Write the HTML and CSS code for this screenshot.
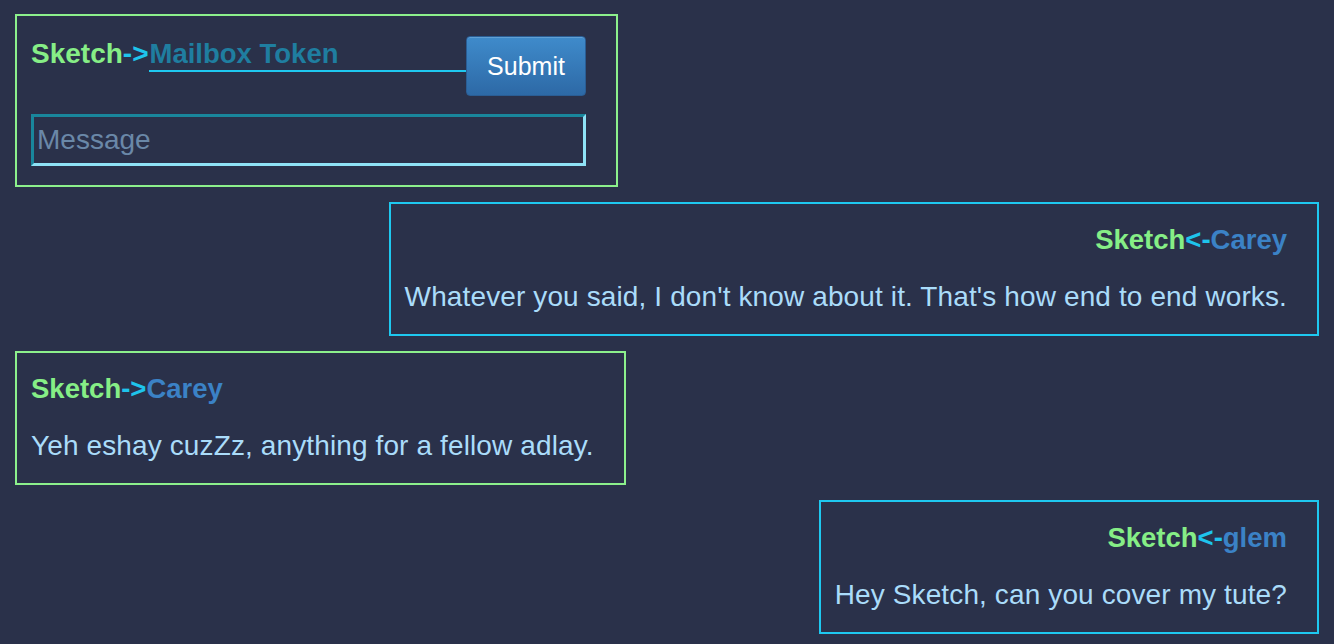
FILE: index.html
```html
<!DOCTYPE html>
<html lang="en">
<head>
<meta charset="utf-8">
<title>Sketch Mailbox</title>
<link rel="stylesheet" href="styles.css">
</head>
<body>
<main class="feed">
  <form class="card card-out compose">
    <div class="compose-row">
      <span class="who"><span class="me">Sketch</span><span class="arrow">-&gt;</span></span>
      <input class="token" type="text" placeholder="Mailbox Token">
      <button class="submit" type="button">Submit</button>
    </div>
    <input class="message-input" type="text" placeholder="Message">
  </form>

  <section class="card card-in">
    <div class="head"><span class="me">Sketch</span><span class="arrow">&lt;-</span><span class="peer">Carey</span></div>
    <p class="msg">Whatever you said, I don't know about it. That's how end to end works.</p>
  </section>

  <section class="card card-out">
    <div class="head"><span class="me">Sketch</span><span class="arrow">-&gt;</span><span class="peer">Carey</span></div>
    <p class="msg">Yeh eshay cuzZz, anything for a fellow adlay.</p>
  </section>

  <section class="card card-in">
    <div class="head"><span class="me">Sketch</span><span class="arrow">&lt;-</span><span class="peer">glem</span></div>
    <p class="msg">Hey Sketch, can you cover my tute?</p>
  </section>
</main>
</body>
</html>
```

FILE: styles.css
```css
html, body {
  margin: 0;
  background: #2a314a;
}

body {
  padding: 14px 15px;
  font-family: "Liberation Sans", Arial, Helvetica, sans-serif;
  font-size: 28px;
}

.feed {
  display: flex;
  flex-direction: column;
  align-items: flex-start;
  gap: 15px;
}

.card {
  border: 2px solid;
  padding: 20px 30px 21px 14px;
  box-sizing: border-box;
}

.card-out {
  border-color: #8cf08c;
}

.card-in {
  border-color: #1ec8f0;
  align-self: flex-end;
}

.card-in .head {
  text-align: right;
}

.head {
  font-weight: bold;
  font-size: 27.5px;
  line-height: 32px;
  white-space: nowrap;
}

.me {
  color: #86ee86;
}

.arrow {
  color: #1ec4ec;
}

.peer {
  color: #3b82c6;
}

.msg {
  margin: 25px 0 0;
  line-height: 32px;
  letter-spacing: 0.12px;
  color: #aadcfa;
  white-space: nowrap;
}

/* compose form */
.compose {
  padding-bottom: 19px;
}

.compose-row {
  display: flex;
  align-items: flex-start;
  width: 555px;
}

.who {
  font-weight: bold;
  line-height: 32px;
  margin-top: 2px;
  white-space: nowrap;
}

.token {
  flex: 1;
  min-width: 0;
  height: 36px;
  box-sizing: border-box;
  margin: 0;
  padding: 2px 0 0 1px;
  border: none;
  border-bottom: 2px solid #1ec8f0;
  background: transparent;
  font-family: inherit;
  font-size: 27.5px;
  font-weight: bold;
  line-height: 32px;
  color: #1f7ea0;
  outline: none;
}

.token::placeholder {
  color: #1f7ea0;
  opacity: 1;
}

.submit {
  width: 120px;
  height: 60px;
  margin: 0;
  padding: 0;
  box-sizing: border-box;
  border: 1px solid #2a5d94;
  border-radius: 4px;
  background: linear-gradient(#3f8bcb, #2d69a6);
  box-shadow: inset 0 1px 0 rgba(255, 255, 255, 0.18);
  color: #ffffff;
  font-family: inherit;
  font-size: 25px;
  cursor: pointer;
}

.message-input {
  display: block;
  width: 555px;
  height: 52px;
  box-sizing: border-box;
  margin: 18px 0 0;
  padding: 0 3px;
  border: 3px solid;
  border-color: #19869c #8fe2f6 #8fe2f6 #19869c;
  background: transparent;
  font-family: inherit;
  font-size: 28px;
  color: #aadcfa;
  outline: none;
}

.message-input::placeholder {
  color: #6a88a8;
  opacity: 1;
}
```
